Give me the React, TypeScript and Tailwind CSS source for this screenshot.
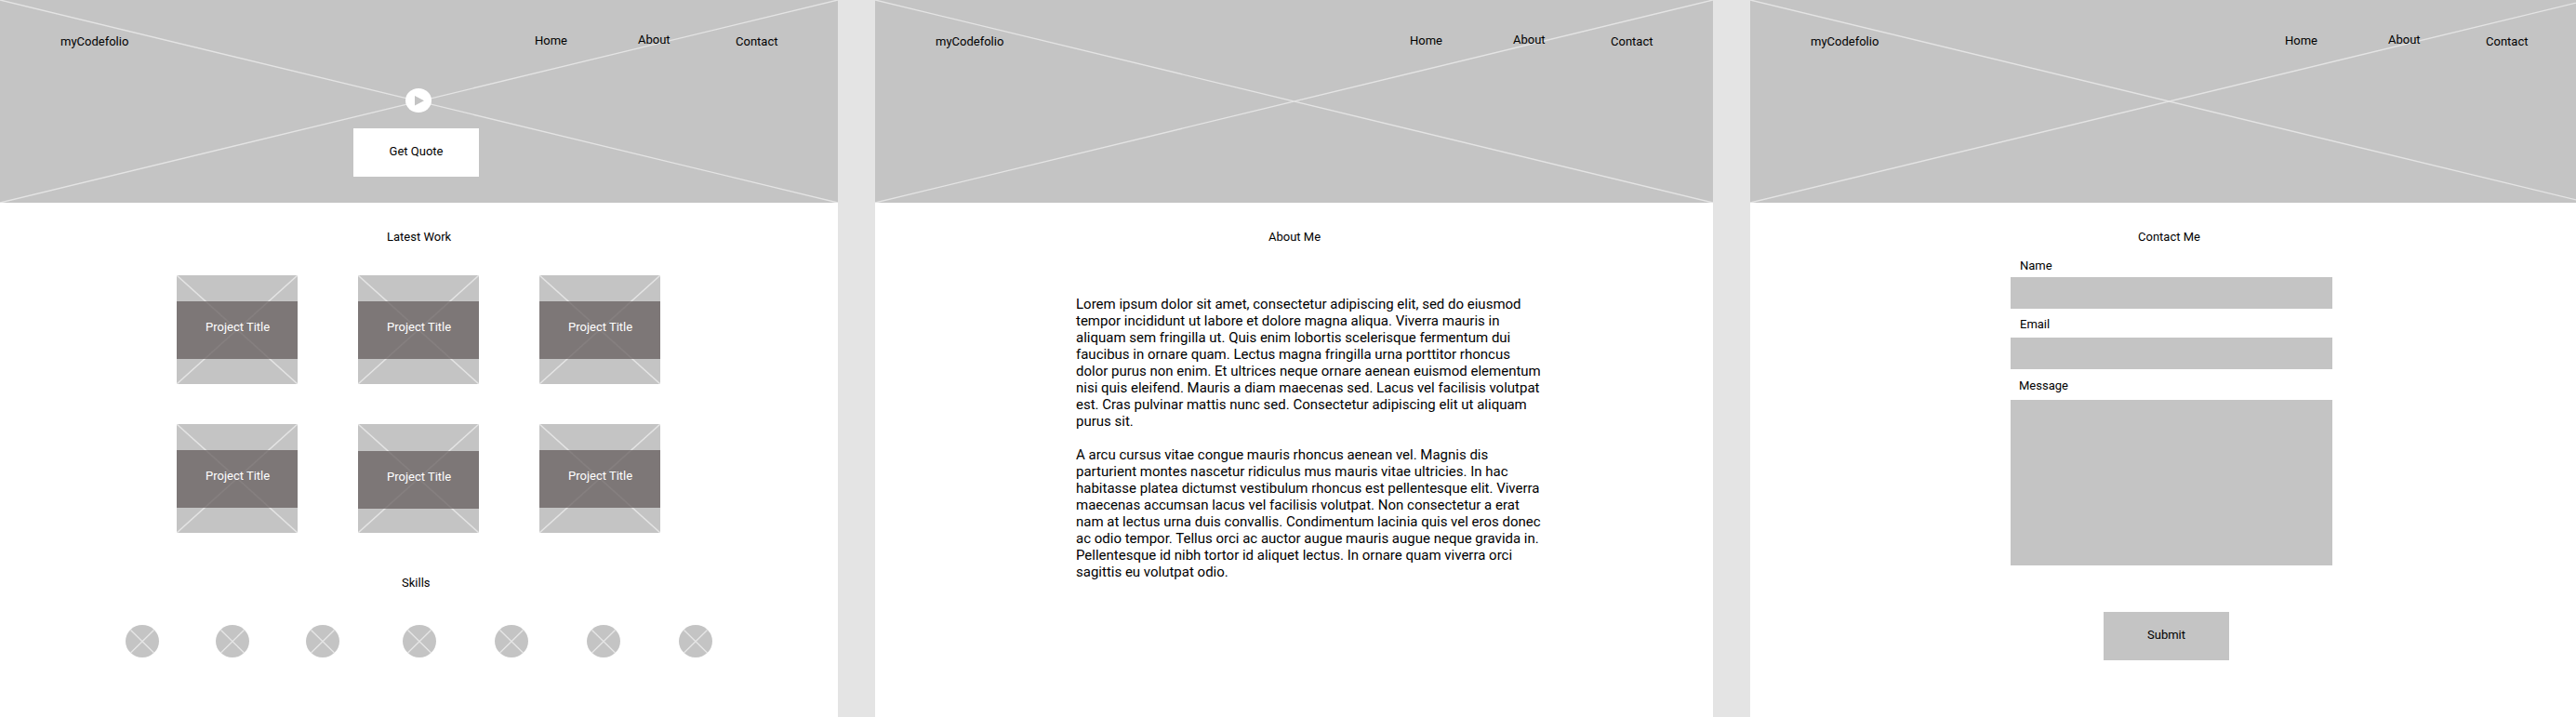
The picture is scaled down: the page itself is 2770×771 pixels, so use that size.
import type { ReactNode } from "react";

function Cross({ className, strokeWidth = 1.4 }: { className: string; strokeWidth?: number }) {
  return (
    <svg className={className} viewBox="0 0 100 100" preserveAspectRatio="none" aria-hidden="true">
      <path
        d="M0 0L100 100M0 100L100 0"
        fill="none"
        stroke="#e4e4e4"
        strokeWidth={strokeWidth}
        vectorEffect="non-scaling-stroke"
      />
    </svg>
  );
}

function Hero({ children }: { children?: ReactNode }) {
  return (
    <header className="grid h-[218px] w-[901px] grid-cols-1 grid-rows-1 bg-[#c4c4c4]">
      <Cross className="col-start-1 row-start-1 h-[218px] w-[901px]" />
      <div className="z-10 col-start-1 row-start-1 flex flex-col">
        <nav className="flex h-[95px] items-start pt-[36px] pl-[65px]">
          <a className="mt-px w-[510px]">myCodefolio</a>
          <a className="w-[111px]">Home</a>
          <a className="-mt-px w-[105px]">About</a>
          <a className="mt-px">Contact</a>
        </nav>
        {children}
      </div>
    </header>
  );
}

function Panel({ hero, children }: { hero?: ReactNode; children: ReactNode }) {
  return (
    <section className="h-[771px] w-[901px] shrink-0 bg-white">
      <Hero>{hero}</Hero>
      <main className="flex flex-col pt-[29px]">{children}</main>
    </section>
  );
}

function ProjectCard({ lowered = false }: { lowered?: boolean }) {
  return (
    <article className="grid h-[117px] w-[130px] grid-cols-1 grid-rows-1 bg-[#c4c4c4]">
      <Cross className="col-start-1 row-start-1 h-[117px] w-[130px]" strokeWidth={1.5} />
      <div
        className={`z-10 col-start-1 row-start-1 h-[62px] bg-[#655e5d]/75 pt-[20px] pl-[31px] text-white ${
          lowered ? "mt-[29px]" : "mt-[28px]"
        }`}
      >
        Project Title
      </div>
    </article>
  );
}

function Skill() {
  return (
    <svg className="h-[35px] w-[36px]" viewBox="0 0 36 35" aria-hidden="true">
      <ellipse cx="18" cy="17.5" rx="18" ry="17.5" fill="#c4c4c4" />
      <path d="M5.5 5.5L30.5 30M5.5 30L30.5 5.5" stroke="#e6e6e6" strokeWidth="1.4" />
    </svg>
  );
}

function HomePanel() {
  return (
    <Panel
      hero={
        <>
          <svg className="ml-[436px] h-[26px] w-[28px]" viewBox="0 0 28 26" aria-hidden="true">
            <ellipse cx="14" cy="13" rx="14" ry="13" fill="#fff" />
            <path d="M10 8L20 13.2L10 18.4Z" fill="#c4c4c4" />
          </svg>
          <button className="mt-[17px] ml-[380px] h-[52px] w-[135px] bg-white pb-[3px]">Get Quote</button>
        </>
      }
    >
      <h2 className="ml-[416px]">Latest Work</h2>
      <div className="mt-[34px] ml-[190px] grid w-[520px] grid-cols-3 gap-x-[65px] gap-y-[43px]">
        <ProjectCard />
        <ProjectCard />
        <ProjectCard />
        <ProjectCard />
        <ProjectCard lowered />
        <ProjectCard />
      </div>
      <h2 className="mt-[46px] ml-[432px]">Skills</h2>
      <div className="mt-[38px] ml-[135px] flex">
        <div className="flex gap-[61px]">
          <Skill />
          <Skill />
          <Skill />
        </div>
        <div className="ml-[68px] flex gap-[63px]">
          <Skill />
          <Skill />
          <Skill />
          <Skill />
        </div>
      </div>
    </Panel>
  );
}

function AboutPanel() {
  return (
    <Panel>
      <h2 className="ml-[423px]">About Me</h2>
      <div className="mt-[56px] ml-[216px] w-[502px] space-y-[18px] text-[15px] leading-[18px]">
        <p>
          Lorem ipsum dolor sit amet, consectetur adipiscing elit, sed do eiusmod
          <br />
          tempor incididunt ut labore et dolore magna aliqua. Viverra mauris in
          <br />
          aliquam sem fringilla ut. Quis enim lobortis scelerisque fermentum dui
          <br />
          faucibus in ornare quam. Lectus magna fringilla urna porttitor rhoncus
          <br />
          dolor purus non enim. Et ultrices neque ornare aenean euismod elementum
          <br />
          nisi quis eleifend. Mauris a diam maecenas sed. Lacus vel facilisis volutpat
          <br />
          est. Cras pulvinar mattis nunc sed. Consectetur adipiscing elit ut aliquam
          <br />
          purus sit.
        </p>
        <p>
          A arcu cursus vitae congue mauris rhoncus aenean vel. Magnis dis
          <br />
          parturient montes nascetur ridiculus mus mauris vitae ultricies. In hac
          <br />
          habitasse platea dictumst vestibulum rhoncus est pellentesque elit. Viverra
          <br />
          maecenas accumsan lacus vel facilisis volutpat. Non consectetur a erat
          <br />
          nam at lectus urna duis convallis. Condimentum lacinia quis vel eros donec
          <br />
          ac odio tempor. Tellus orci ac auctor augue mauris augue neque gravida in.
          <br />
          Pellentesque id nibh tortor id aliquet lectus. In ornare quam viverra orci
          <br />
          sagittis eu volutpat odio.
        </p>
      </div>
    </Panel>
  );
}

function ContactPanel() {
  return (
    <Panel>
      <h2 className="ml-[417px]">Contact Me</h2>
      <form className="mt-[16px] ml-[280px] flex w-[346px] flex-col">
        <label htmlFor="name" className="ml-[10px]">
          Name
        </label>
        <input id="name" className="mt-[5px] h-[34px] bg-[#c4c4c4]" />
        <label htmlFor="email" className="mt-[9px] ml-[10px]">
          Email
        </label>
        <input id="email" className="mt-[7px] h-[34px] bg-[#c4c4c4]" />
        <label htmlFor="message" className="mt-[10px] ml-[9px]">
          Message
        </label>
        <textarea id="message" className="mt-[8px] h-[178px] resize-none bg-[#c4c4c4]" />
        <button type="button" className="mt-[50px] ml-[100px] h-[52px] w-[135px] bg-[#c4c4c4] pb-[3px]">
          Submit
        </button>
      </form>
    </Panel>
  );
}

export default function App() {
  return (
    <div className="flex h-[771px] w-[2770px] gap-[40px] overflow-hidden bg-[#e4e4e4] font-['Roboto',sans-serif] text-[13px] leading-[15px] text-black">
      <HomePanel />
      <AboutPanel />
      <ContactPanel />
    </div>
  );
}
